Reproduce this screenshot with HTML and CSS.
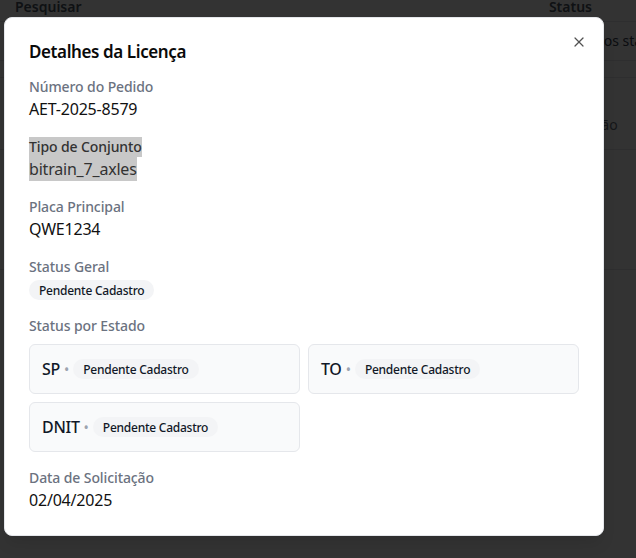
FILE: index.html
```html
<!DOCTYPE html>
<html lang="pt-BR">
<head>
<meta charset="utf-8">
<title>Detalhes da Licença</title>
<link rel="stylesheet" href="styles.css">
</head>
<body>
<div class="page">
  <div class="thead">
    <span class="th th-search">Pesquisar</span>
    <span class="th th-status">Status</span>
  </div>
  <div class="row row-a"><span class="cell-text">Todos os status</span></div>
  <div class="row row-b"></div>
  <div class="row row-c"><span class="cell-text muted">Solicitação</span></div>
  <div class="row row-d"></div>
</div>
<div class="overlay"></div>
<div class="dialog" role="dialog">
  <h2 class="title">Detalhes da Licença</h2>
  <button class="close" aria-label="Fechar">
    <svg width="16" height="16" viewBox="0 0 24 24" fill="none" stroke="currentColor" stroke-width="1.8" stroke-linecap="round" stroke-linejoin="round"><path d="M18 6 6 18"/><path d="m6 6 12 12"/></svg>
  </button>
  <div class="fields">
    <div class="field">
      <div class="label">Número do Pedido</div>
      <div class="value">AET-2025-8579</div>
    </div>
    <div class="field">
      <div class="label"><span class="sel">Tipo de Conjunto</span></div>
      <div class="value"><span class="sel">bitrain_7_axles</span></div>
    </div>
    <div class="field">
      <div class="label">Placa Principal</div>
      <div class="value">QWE1234</div>
    </div>
    <div class="field">
      <div class="label">Status Geral</div>
      <div class="badge-wrap"><span class="badge">Pendente Cadastro</span></div>
    </div>
    <div class="field">
      <div class="label">Status por Estado</div>
      <div class="states">
        <div class="state"><span class="uf">SP</span><span class="dot">•</span><span class="badge">Pendente Cadastro</span></div>
        <div class="state"><span class="uf">TO</span><span class="dot">•</span><span class="badge">Pendente Cadastro</span></div>
        <div class="state"><span class="uf">DNIT</span><span class="dot">•</span><span class="badge">Pendente Cadastro</span></div>
      </div>
    </div>
    <div class="field">
      <div class="label">Data de Solicitação</div>
      <div class="value">02/04/2025</div>
    </div>
  </div>
</div>
</body>
</html>
```
FILE: styles.css
```css
* { box-sizing: border-box; }
html, body { margin: 0; padding: 0; }
body {
  width: 636px;
  height: 558px;
  overflow: hidden;
  background: #ffffff;
  font-family: "Noto Sans", "Open Sans", sans-serif;
  color: #111827;
  position: relative;
}
.page { width: 636px; }
.thead {
  height: 22px;
  border-bottom: 1px solid #e5e7eb;
  display: flex;
  align-items: flex-start;
  padding: 0 15px;
  font-size: 14px;
  font-weight: 600;
  color: #4b5563;
  line-height: 14px;
}
.th-status { margin-left: auto; margin-right: 29px; }
.row { border-bottom: 1px solid #e5e7eb; font-size: 14px; line-height: 20px; color: #374151; overflow: hidden; white-space: nowrap; }
.row-a { height: 39px; display: flex; align-items: center; padding-left: 561px; }
.row-b { height: 17px; }
.row-c { height: 72px; display: flex; align-items: flex-start; padding-top: 37px; padding-left: 548px; }
.row-d { height: 120px; }
.muted { color: #6b7280; }

.overlay {
  position: absolute;
  inset: 0;
  background: rgba(0, 0, 0, 0.8);
}
.dialog {
  position: absolute;
  left: 4px;
  top: 17px;
  width: 600px;
  background: #ffffff;
  border: 1px solid #e5e7eb;
  border-radius: 8px;
  padding: 25px 24px 23px;
  box-shadow: 0 10px 15px -3px rgba(0,0,0,0.1);
}
.title {
  margin: 0 0 16px;
  font-size: 17px;
  line-height: 18px;
  font-weight: 600;
  color: #0a0a0a;
  letter-spacing: -0.4px;
}
.close {
  position: absolute;
  right: 16px;
  top: 16px;
  width: 16px;
  height: 16px;
  padding: 0;
  border: 0;
  background: none;
  color: #0a0a0a;
  opacity: 0.7;
  display: flex;
}
.fields { display: flex; flex-direction: column; gap: 16px; }
.label {
  font-size: 14px;
  line-height: 20px;
  font-weight: 500;
  color: #6b7280;
  letter-spacing: -0.1px;
}
.value {
  font-size: 16px;
  line-height: 24px;
  color: #111111;
  letter-spacing: -0.2px;
}
.sel {
  display: inline-block;
  background: #c8c8c8;
  color: #323232;
}
.badge-wrap { margin-top: 3px; display: flex; }
.badge {
  display: inline-flex;
  align-items: center;
  height: 20px;
  padding: 0 10px;
  border-radius: 9999px;
  background: #f3f4f6;
  font-size: 12px;
  font-weight: 500;
  color: #111827;
  white-space: nowrap;
  letter-spacing: -0.25px;
}
.states {
  margin-top: 8px;
  display: grid;
  grid-template-columns: 1fr 1fr;
  gap: 8px;
}
.state {
  display: flex;
  align-items: center;
  height: 50px;
  padding: 0 12px;
  background: #f9fafb;
  border: 1px solid #e5e7eb;
  border-radius: 6px;
}
.uf {
  font-size: 16px;
  font-weight: 500;
  color: #111827;
  letter-spacing: -0.3px;
}
.dot {
  margin: 0 4px 0 4px;
  color: #9ca3af;
  font-size: 14px;
}
```
